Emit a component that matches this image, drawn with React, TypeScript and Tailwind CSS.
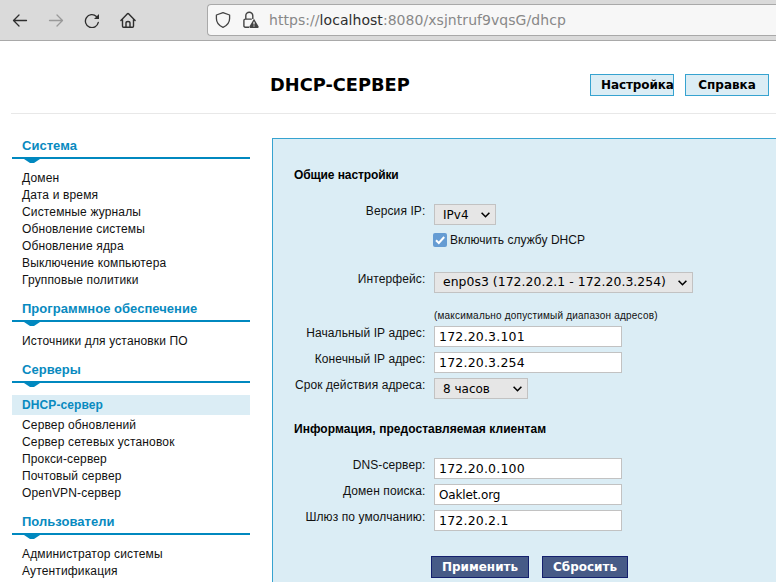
import React from 'react';

type Group = { title: string; items: string[] };

const groups: Group[] = [
  {
    title: 'Система',
    items: [
      'Домен',
      'Дата и время',
      'Системные журналы',
      'Обновление системы',
      'Обновление ядра',
      'Выключение компьютера',
      'Групповые политики',
    ],
  },
  { title: 'Программное обеспечение', items: ['Источники для установки ПО'] },
  {
    title: 'Серверы',
    items: [
      'DHCP-сервер',
      'Сервер обновлений',
      'Сервер сетевых установок',
      'Прокси-сервер',
      'Почтовый сервер',
      'OpenVPN-сервер',
    ],
  },
  { title: 'Пользователи', items: ['Администратор системы', 'Аутентификация'] },
];

const activeItem = 'DHCP-сервер';

function Toolbar() {
  return (
    <div className="flex h-[41px] shrink-0 items-start border-b border-[#a9a9a9] bg-[#dadada]">
      <div className="flex h-10 w-[207px] shrink-0 items-center gap-5 pl-3 text-[#2e2e2e]">
        <svg width="16" height="16" viewBox="0 0 16 16" fill="none" stroke="currentColor" strokeWidth="1.3" strokeLinecap="round" strokeLinejoin="round">
          <path d="M14.5 8.5H1.5M7 3L1.5 8.5L7 14" />
        </svg>
        <svg className="text-[#999]" width="16" height="16" viewBox="0 0 16 16" fill="none" stroke="currentColor" strokeWidth="1.3" strokeLinecap="round" strokeLinejoin="round">
          <path d="M1.5 8.5H14.5M9 3L14.5 8.5L9 14" />
        </svg>
        <svg width="16" height="16" viewBox="0 0 16 16" fill="none" stroke="currentColor" strokeWidth="1.35" strokeLinecap="round">
          <path d="M14.3 10.4A6.5 6.5 0 1 1 12.4 4.4" />
          <path d="M15 2V7H10Z" fill="currentColor" stroke="none" />
        </svg>
        <svg className="-ml-[0.5px]" width="16" height="16" viewBox="0 0 16 16" fill="none" stroke="currentColor" strokeWidth="1.4" strokeLinecap="round" strokeLinejoin="round">
          <path d="M.9 8.4L7.2 1.9Q8 1.2 8.8 1.9L15.1 8.4M2.5 7.5V14.3Q2.5 15.3 3.5 15.3H12.5Q13.5 15.3 13.5 14.3V7.5M6 15V11Q6 9.5 8 9.5Q10 9.5 10 11V15" />
        </svg>
      </div>
      <div className="mt-1 flex h-8 flex-1 items-center rounded-l-[4px] border border-r-0 border-[#a9a9a9] bg-[#f7f7f7] pl-[7px]">
        <svg className="shrink-0 text-[#444]" width="16" height="18" viewBox="0 0 16 18" fill="none" stroke="currentColor" strokeWidth="1.3" strokeLinejoin="round">
          <path d="M8 1.6L14.6 4V7.5C14.6 12 12 14.6 8 16.3C4 14.6 1.4 12 1.4 7.5V4Z" />
        </svg>
        <svg className="ml-3 shrink-0 text-[#444]" width="16" height="18" viewBox="0 0 16 18" fill="none" stroke="currentColor" strokeWidth="1.4">
          <path d="M6 16.2H2.3Q.9 16.2 .9 14.8V9.4Q.9 8.1 2.3 8.1H8.8M2.8 8V4.8A3.5 3.5 0 0 1 9.8 4.8V8" />
          <path d="M11 7.8L15.6 15.4Q15.9 16.9 14.7 16.9H7.3Q6.1 16.9 6.4 15.4Z" fill="currentColor" stroke="none" />
          <path d="M11 10.8V13.5M11 14.4V15.6" stroke="#f7f7f7" strokeWidth="1.2" />
        </svg>
        <span className="ml-[10px] whitespace-nowrap font-['DejaVu_Sans',sans-serif] text-[14px] leading-5 tracking-[0.05px] text-[#888]">
          https://<span className="text-[#2e2e2e]">localhost</span>:8080/xsjntruf9vqsG/dhcp
        </span>
      </div>
    </div>
  );
}

function Header() {
  return (
    <header className="ml-[11px] flex h-[73px] shrink-0 items-start border-b border-[#e8e8e8] font-['DejaVu_Sans',sans-serif] font-bold text-black">
      <h1 className="mt-8 ml-[259px] w-[320px] shrink-0 text-[17.8px] leading-6">DHCP-СЕРВЕР</h1>
      <button className="mt-[33px] mr-[11px] h-[22px] w-[84px] shrink-0 overflow-hidden border border-[#36a3d0] bg-[#dbedf5] pl-[10px] text-left text-[12px] leading-5 tracking-[-0.1px] whitespace-nowrap">
        Настройка
      </button>
      <button className="mt-[33px] h-[22px] w-[84px] shrink-0 border border-[#36a3d0] bg-[#dbedf5] text-center text-[12px] leading-5">
        Справка
      </button>
    </header>
  );
}

function Sidebar() {
  return (
    <nav className="ml-3 w-[238px] shrink-0 pt-6 text-[12px] leading-[17px] tracking-[0.15px] text-[#111]">
      {groups.map((group) => (
        <section key={group.title} className="pb-3">
          <h2 className="h-[19px] pl-[10px] text-[13px] leading-[16px] font-bold tracking-[0.03px] text-[#088ac0]">{group.title}</h2>
          <div className="h-[13px] border-t-2 border-[#0088bf] pl-3">
            <svg width="16" height="4" viewBox="0 0 16 4" className="block">
              <path d="M0 0H16L10 4H6Z" fill="#0088bf" />
            </svg>
          </div>
          <ul>
            {group.items.map((item) =>
              item === activeItem ? (
                <li key={item} className="mt-px mb-0.5 h-5 bg-[#dbedf5] pl-[10px] leading-5 font-bold tracking-[0.1px] text-[#088ac0]">
                  {item}
                </li>
              ) : (
                <li key={item} className="pl-[10px]">{item}</li>
              ),
            )}
          </ul>
        </section>
      ))}
    </nav>
  );
}

function Row({ label, className, children }: { label?: string; className: string; children: React.ReactNode }) {
  return (
    <div className={`flex items-start ${className}`}>
      <div className="w-[153px] shrink-0 pr-[0.6px] text-right leading-[14px] tracking-[0.1px]">{label}</div>
      <div className="ml-2">{children}</div>
    </div>
  );
}

function Select({ value, className }: { value: string; className: string }) {
  return (
    <div className={`flex h-[21px] items-center justify-between border border-[#c2c2c2] bg-[#e6e6e6] pr-[5px] pl-2 font-['DejaVu_Sans',sans-serif] whitespace-nowrap text-black ${className}`}>
      <span>{value}</span>
      <svg width="9" height="6" viewBox="0 0 9 6" fill="none" stroke="currentColor" strokeWidth="1.6">
        <path d="M.6 .8L4.5 4.7L8.4 .8" />
      </svg>
    </div>
  );
}

function TextInput({ value, className = 'text-[12.5px] tracking-[0.2px]' }: { value: string; className?: string }) {
  return (
    <input
      className={`block h-[21px] w-[188px] border border-[#c2c2c2] bg-white px-1 font-['DejaVu_Sans',sans-serif] text-black outline-none ${className}`}
      defaultValue={value}
    />
  );
}

function Settings() {
  return (
    <main className="mt-6 ml-[22px] flex-1 border-t border-l border-[#36a3d0] bg-[#dbedf5] text-[12px] text-[#111]">
      <h3 className="mt-[29px] ml-[21px] h-[36px] leading-[14px] font-bold tracking-[-0.1px] text-black">Общие настройки</h3>
      <Row label="Версия IP:" className="h-[29px]">
        <Select value="IPv4" className="w-[62px] text-[12px]" />
      </Row>
      <Row className="h-[39px]">
        <label className="-ml-px flex items-center">
          <svg width="14" height="14" viewBox="0 0 14 14" className="mr-[3px]">
            <rect width="14" height="14" rx="2" fill="#659cd3" />
            <path d="M3 7.2L5.8 10L11.2 4" fill="none" stroke="#fff" strokeWidth="2" />
          </svg>
          <span className="leading-[14px] tracking-[0.03px]">Включить службу DHCP</span>
        </label>
      </Row>
      <Row label="Интерфейс:" className="h-[38px]">
        <Select value="enp0s3 (172.20.2.1 - 172.20.3.254)" className="w-[259px] text-[12.4px] tracking-[0.05px]" />
      </Row>
      <Row className="h-[16px]">
        <div className="text-[10px] leading-[12px] tracking-[0.2px]">(максимально допустимый диапазон адресов)</div>
      </Row>
      <Row label="Начальный IP адрес:" className="h-[26px]">
        <TextInput value="172.20.3.101" />
      </Row>
      <Row label="Конечный IP адрес:" className="h-[26px]">
        <TextInput value="172.20.3.254" />
      </Row>
      <Row label="Срок действия адреса:" className="h-[44px]">
        <Select value="8 часов" className="w-[94px] text-[12px]" />
      </Row>
      <h3 className="ml-[21px] h-[36px] leading-[14px] font-bold tracking-[0.05px] text-black">Информация, предоставляемая клиентам</h3>
      <Row label="DNS-сервер:" className="h-[26px]">
        <TextInput value="172.20.0.100" />
      </Row>
      <Row label="Домен поиска:" className="h-[26px]">
        <TextInput value="Oaklet.org" className="text-[12px] tracking-[-0.15px]" />
      </Row>
      <Row label="Шлюз по умолчанию:" className="h-[46px]">
        <TextInput value="172.20.2.1" />
      </Row>
      <div className="ml-[158px] flex gap-[13px] font-['DejaVu_Sans',sans-serif] text-[12px] leading-5 font-bold text-white">
        <button className="h-[22px] w-[98px] border border-[#14206e] bg-[#475b87]">Применить</button>
        <button className="h-[22px] w-[86px] border border-[#14206e] bg-[#475b87]">Сбросить</button>
      </div>
    </main>
  );
}

export default function App() {
  return (
    <div className="flex h-[582px] w-[776px] flex-col overflow-hidden bg-white font-['Liberation_Sans',Arial,sans-serif]">
      <Toolbar />
      <Header />
      <div className="flex min-h-0 flex-1">
        <Sidebar />
        <Settings />
      </div>
    </div>
  );
}
